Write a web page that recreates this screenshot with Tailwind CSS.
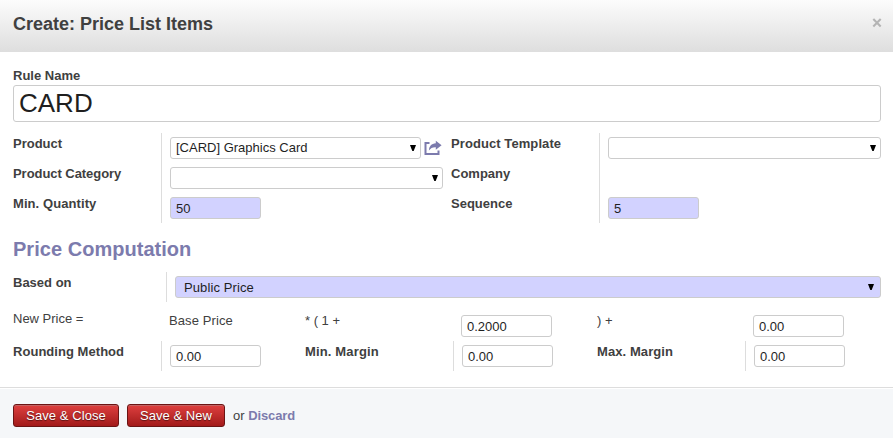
<!DOCTYPE html>
<html lang="en">
<head>
<meta charset="utf-8">
<title>Create: Price List Items</title>
<script src="https://cdn.jsdelivr.net/npm/@tailwindcss/browser@4"></script>
</head>
<body class="flex h-[438px] w-[893px] flex-col overflow-hidden bg-white font-['Liberation_Sans',Arial,sans-serif] text-[13px] leading-[15px] text-[#404040]">
<header class="flex h-[52px] shrink-0 items-start justify-between bg-linear-to-b from-[#fcfcfc] to-[#dedede] pr-[11px] pl-[13px]">
  <h1 class="pt-[14px] text-[18px] leading-5 font-bold text-[#404040]">Create: Price List Items</h1>
  <button aria-label="Close" class="mt-[18px]"><svg class="block" width="10" height="10" viewBox="0 0 10 10" fill="none" stroke="#b4b4b4" stroke-width="2.1"><path d="M1.3 1L8.7 8.4M8.7 1L1.3 8.4"/></svg></button>
</header>
<main class="flex h-[335px] shrink-0 flex-col pt-4 pr-3 pl-[13px]">
  <label class="font-bold">Rule Name</label>
  <div class="mt-[2px] h-[37px] rounded-[3px] border border-[#ccc] pt-[2px] pl-[5px] text-[26px] leading-[30px] text-[#1f1f1f]">CARD</div>

  <section class="mt-[11px] flex h-[90px]">
    <div class="w-[148px] font-bold *:h-[30px] *:pt-[3px]">
      <div>Product</div><div class="tracking-[-0.05px]">Product Category</div><div class="tracking-[0.08px]">Min. Quantity</div>
    </div>
    <div class="w-[290px] border-l border-[#ddd] pt-1 pl-2 text-[#1f1f1f]">
      <div class="flex h-[30px]">
        <div class="flex h-[22px] w-[251px] justify-between rounded-[3px] border border-[#ccc] pt-[2px] pr-1 pl-[5px]"><span>[CARD] Graphics Card</span><svg class="mt-[5px]" width="6" height="7" viewBox="0 0 6 7"><path fill="#000" d="M0 0H6L3.7 6H2.3Z"/></svg></div>
        <svg class="mt-[3px] ml-[3px]" width="18" height="16" viewBox="0 0 18 16" fill="none"><path d="M5.5 3H1.5V14H14.5V10.5" stroke="#7c7bad" stroke-width="2"/><path fill="#7c7bad" d="M11.8 .8L17.6 5.2L11.8 9.7V7.2C8.8 7 6.6 8 4.9 10.6C5.1 6.2 7.5 3.6 11.8 3.3Z"/></svg>
      </div>
      <div class="h-[30px]"><div class="flex h-[22px] w-[273px] justify-end rounded-[3px] border border-[#ccc] pt-[7px] pr-1"><svg width="6" height="7" viewBox="0 0 6 7"><path fill="#000" d="M0 0H6L3.7 6H2.3Z"/></svg></div></div>
      <div class="h-[22px] w-[91px] rounded-[3px] border border-[#ccc] bg-[#d2d2ff] pt-[3px] pl-[5px]">50</div>
    </div>
    <div class="w-[148px] font-bold *:h-[30px] *:pt-[3px]">
      <div class="tracking-[0.08px]">Product Template</div><div>Company</div><div>Sequence</div>
    </div>
    <div class="w-[282px] border-l border-[#ddd] pt-1 pl-2 text-[#1f1f1f]">
      <div class="flex h-[22px] w-[273px] justify-end rounded-[3px] border border-[#ccc] pt-[7px] pr-1"><svg width="6" height="7" viewBox="0 0 6 7"><path fill="#000" d="M0 0H6L3.7 6H2.3Z"/></svg></div>
      <div class="mt-[38px] h-[22px] w-[91px] rounded-[3px] border border-[#ccc] bg-[#d2d2ff] pt-[3px] pl-[5px]">5</div>
    </div>
  </section>

  <h2 class="mt-[15px] h-[34px] text-[20px] leading-[22px] font-bold tracking-[0.03px] text-[#7c7bad]">Price Computation</h2>

  <section class="flex h-[30px]">
    <div class="w-[153px] pt-[3px] font-bold">Based on</div>
    <div class="flex-1 border-l border-[#ddd] pt-1 pl-2">
      <div class="flex h-[22px] justify-between rounded-[3px] border border-[#ccc] bg-[#d2d2ff] pt-[3px] pr-[6px] pl-2 text-[#1f1f1f]"><span class="tracking-[0.1px]">Public Price</span><svg class="mt-1" width="6" height="7" viewBox="0 0 6 7"><path fill="#000" d="M0 0H6L3.7 6H2.3Z"/></svg></div>
    </div>
  </section>

  <section class="mt-[9px] flex h-[30px]">
    <div class="w-[156px]">New Price =</div>
    <div class="w-[136px] pt-[2px] tracking-[0.1px]">Base Price</div>
    <div class="w-[156px] pt-[2px]">* ( 1 +</div>
    <div class="w-[136px] pt-1"><div class="h-[22px] w-[91px] rounded-[3px] border border-[#ccc] pt-[3px] pl-[5px] text-[#1f1f1f]">0.2000</div></div>
    <div class="w-[156px] pt-[2px]">) +</div>
    <div class="pt-1"><div class="h-[22px] w-[91px] rounded-[3px] border border-[#ccc] pt-[3px] pl-[5px] text-[#1f1f1f]">0.00</div></div>
  </section>

  <section class="flex h-[30px]">
    <div class="w-[148px] pt-[3px] font-bold tracking-[0.04px]">Rounding Method</div>
    <div class="w-[144px] border-l border-[#ddd] pt-1 pl-2"><div class="h-[22px] w-[91px] rounded-[3px] border border-[#ccc] pt-[3px] pl-[5px] text-[#1f1f1f]">0.00</div></div>
    <div class="w-[148px] pt-[3px] font-bold tracking-[0.15px]">Min. Margin</div>
    <div class="w-[144px] border-l border-[#ddd] pt-1 pl-2"><div class="h-[22px] w-[91px] rounded-[3px] border border-[#ccc] pt-[3px] pl-[5px] text-[#1f1f1f]">0.00</div></div>
    <div class="w-[148px] pt-[3px] font-bold tracking-[0.08px]">Max. Margin</div>
    <div class="border-l border-[#ddd] pt-1 pl-2"><div class="h-[22px] w-[91px] rounded-[3px] border border-[#ccc] pt-[3px] pl-[5px] text-[#1f1f1f]">0.00</div></div>
  </section>
</main>
<footer class="flex flex-1 items-start border-t border-[#ddd] bg-[#f5f7f9] pt-4 pl-[13px] shadow-[inset_0_1px_0_#fff]">
  <button class="h-[23px] w-[106px] rounded-[3px] border border-[#6b1414] bg-linear-to-b from-[#df3f3f] to-[#a21a1a] leading-[15px] tracking-[0.08px] text-white shadow-[inset_0_1px_0_rgba(155,155,155,0.4)] [text-shadow:0_1px_1px_rgba(0,0,0,0.5)]">Save &amp; Close</button>
  <button class="ml-2 h-[23px] w-[98px] rounded-[3px] border border-[#6b1414] bg-linear-to-b from-[#df3f3f] to-[#a21a1a] leading-[15px] tracking-[0.06px] text-white shadow-[inset_0_1px_0_rgba(155,155,155,0.4)] [text-shadow:0_1px_1px_rgba(0,0,0,0.5)]">Save &amp; New</button>
  <span class="mt-1 ml-2">or <a class="font-bold tracking-[-0.1px] text-[#7c7bad]">Discard</a></span>
</footer>
</body>
</html>
